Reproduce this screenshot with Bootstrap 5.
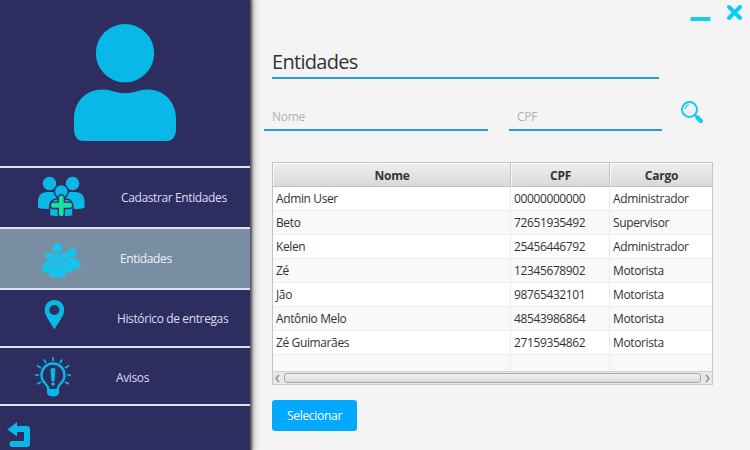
<!DOCTYPE html>
<html lang="pt-BR">
<head>
<meta charset="utf-8">
<meta name="viewport" content="width=device-width, initial-scale=1">
<title>Entidades</title>
<link href="https://cdn.jsdelivr.net/npm/bootstrap@5.3.0/dist/css/bootstrap.min.css" rel="stylesheet">
<style>
body{width:750px;height:450px;background:#f4f4f4;font-family:"Open Sans","Noto Sans",sans-serif;font-size:12px;line-height:16px;color:#333;letter-spacing:-.38px}
svg{display:block;flex:none}
.side{width:250px;background:#2e2d5f;box-shadow:0 0 2px 2px #555,1px 0 7px 2px #999;z-index:1}
.profile{height:166px;padding:23px 0 0 73px}
.side-link{height:61px;border-top:2px solid #e2e2f0;color:#dcdcf0;text-decoration:none}
.side-link.short{height:58px}
.side-link.active{background:#798ea2;color:#eef2fa}
.side-icon{width:116px;flex:none}
.side-foot{border-top:2px solid #e2e2f0;padding:15px 0 0 7px}
.content{padding:4px 7px 0 22px}
.win-bar{height:18px;gap:15px}
.title-line{width:387px;height:33px;margin-top:24px;border-bottom:2px solid #2a9bd2;font-size:20px;line-height:32px;font-weight:400;letter-spacing:-.7px}
.search{margin:20px 0 0 -8px;height:32px}
.line-input{height:32px;border:0;border-bottom:2px solid #2a9bd2;border-radius:0;background:none;padding:4px 8px 0;font-size:12px;letter-spacing:-.3px;outline:0}
.line-input::placeholder{color:#b1b1b1;opacity:1}
.line-input.name{width:224px}
.line-input.cpf{width:153px;margin:0 18px 0 21px}
.grid-box{width:441px;height:223px;margin-top:31px;border:1px solid #c4c4c4;background:#f9f9f9}
.grid-table{table-layout:fixed;width:439px;border-collapse:separate;border-spacing:0;margin:0}
.grid-table th{height:24px;padding:2px 0 0 1px;text-align:center;font-weight:700;letter-spacing:-.25px;background:linear-gradient(#efefef,#d9d9d9);border-right:1px solid #c4c4c4;border-bottom:1px solid #c4c4c4;box-shadow:inset 1px 1px #f8f8f8}
.grid-table td{height:24px;padding:1px 0 0 3px;background:#fff;border-right:1px solid #ececec;border-bottom:1px solid #ececec;white-space:nowrap}
.grid-table tr:nth-child(even) td{background:#f9f9f9}
.grid-table tr>:last-child{border-right:0}
.grid-table .filler td{height:16px;border-bottom:0}
.hbar{height:13px;border-top:1px solid #d4d4d4;background:#e8e8e8;padding:0 2px 0 2px}
.hthumb{height:10px;margin:1px 4px 0 4px;border:1px solid #a8a8a8;border-radius:3px;background:linear-gradient(#f2f2f2,#dadada)}
.btn-pick{width:85px;height:31px;margin-top:15px;padding:0;border:0;border-radius:3px;background:#03a9ff;color:#fff;font-size:12px;letter-spacing:-.3px}
.btn-pick:hover{background:#0398e8;color:#fff}
</style>
</head>
<body class="d-flex overflow-hidden">
<aside class="side d-flex flex-column flex-shrink-0 position-relative">
  <div class="profile">
    <svg width="104" height="119" fill="#08b9e8"><circle cx="52" cy="30.200" r="29.200"/><path d="M1 96C1 78 14 66.600 29 66.600C40 66.600 40 70.300 52 70.300S64 66.600 75 66.600C90 66.600 103 78 103 96V108Q102 118 93 118H11Q2 118 1 108Z"/></svg>
  </div>
  <nav class="d-flex flex-column">
    <a class="side-link d-flex align-items-center" href="#">
      <span class="side-icon ps-4"><svg class="ms-2" width="60" height="54" fill="#08b9e8">
        <circle cx="17.500" cy="12.500" r="6.800"/><circle cx="40.500" cy="12.500" r="6.800"/>
        <path d="M6 37V31Q6 21 15 21H20Q24 21 25 27V37Q14 39 6 37ZM52.500 37V31Q52.500 21 43.500 21H38Q34 21 33 27V37Q44 39 52.500 37Z"/>
        <g stroke="#2e2d5f" stroke-width="1.500"><circle cx="29.300" cy="20.500" r="7"/><path d="M17.500 45V38Q17.500 28 25 28H34Q41 28 41 38V45Q29 47 17.500 45Z"/></g>
        <path d="M26.300 26Q29.300 21 32.300 26V31.200H39Q42.500 34.200 39 37.500H32.300V44Q29.300 48 26.300 44V37.500H20Q16.500 34.200 20 31.200H26.300Z" fill="#18e29b" stroke="#2e2d5f" stroke-width="1.300"/>
      </svg></span><span style="margin-left:5px">Cadastrar Entidades</span>
    </a>
    <a class="side-link active d-flex align-items-center" href="#">
      <span class="side-icon ps-4"><svg class="ms-3 mt-1" width="44" height="38" fill="#15c4f0" stroke="#56a3c0" stroke-width="1">
        <circle cx="17.500" cy="6" r="5"/><path d="M11.500 22V17Q11.500 11.500 17.500 11.500T23.500 17V22Z"/>
        <circle cx="32" cy="10.500" r="4.700"/><path d="M25 26V20Q26 15.500 32 15.500Q40 15.500 40 23V26Q33 29 25 26Z"/>
        <circle cx="9.800" cy="14.500" r="4.500"/><path d="M2 30V26Q2 19.400 10 19.400Q17 19.400 17 26V30Q9 32 2 30Z"/>
        <circle cx="25" cy="14.500" r="4.500"/><path d="M18 30V26Q18 19.400 25 19.400Q32.500 19.400 32.500 26V30Q25 32 18 30Z"/>
        <circle cx="17.500" cy="19" r="5"/><path d="M9.500 34.500V31Q9.500 24.500 17.500 24.500T25.500 31V34.500Q17.500 37.500 9.500 34.500Z"/>
      </svg></span><span style="margin-left:4px">Entidades</span>
    </a>
    <a class="side-link short d-flex align-items-center" href="#">
      <span class="side-icon ps-4"><svg width="60" height="50" fill="#08b9e8"><path fill-rule="evenodd" d="M30.400 7C36 7 40.200 11 40.200 17C40.200 23 34 30 30.400 36.500C27 30 20.700 23 20.700 17C20.700 11 25 7 30.400 7ZM30.400 12A5 5 0 1 0 30.400 22A5 5 0 1 0 30.400 12Z"/></svg></span><span style="margin-left:1px;padding-top:2px">Histórico de entregas</span>
    </a>
    <a class="side-link short d-flex align-items-center" href="#">
      <span class="side-icon ps-4"><svg width="60" height="44" fill="none" stroke="#08b9e8" stroke-width="1.700">
        <path d="M25 37Q24 32 21 29Q17.500 26 17.500 21A11.500 11.500 0 0 1 40.500 21Q40.500 26 37 29Q34 32 33 37Z" stroke-width="2.400"/>
        <path d="M23 35H35V39Q34 42.500 29 42.500Q24 42.500 23 39Z" fill="#08b9e8" stroke="none"/>
        <path d="M27 15Q29 13.500 31 15L30 27H28Z" fill="#08b9e8" stroke-width="1"/><circle cx="29" cy="30" r="1.800" fill="#08b9e8" stroke="none"/>
        <path d="M29 3V7M20 5.500L22 9M38 5.500L36 9M13 11.500L17 14M45 11.500L41 14M11 21H15M43 21H47M13 30L17 28M45 30L41 28"/>
      </svg></span><span class="pt-1">Avisos</span>
    </a>
  </nav>
  <div class="side-foot flex-grow-1">
    <svg width="24" height="27" fill="#08b9e8"><path d="M.5 8.500L10 1V5H20Q23 5 23 8V23Q23 26 20 26H5Q2.500 26 2.500 23Q2.500 20 5 20H17V11H10V15.500Z"/></svg>
  </div>
</aside>
<main class="content flex-grow-1">
  <div class="win-bar d-flex justify-content-end">
    <svg width="21" height="18"><path d="M.500 15H20.500" stroke="#18cdf2" stroke-width="4"/></svg>
    <svg width="17" height="18"><path d="M3 3L14 14M14 3L3 14" stroke="#08cdf5" stroke-width="4" stroke-linecap="round"/></svg>
  </div>
  <h1 class="title-line mb-0">Entidades</h1>
  <form class="search d-flex">
    <input class="line-input name" placeholder="Nome" aria-label="Nome">
    <input class="line-input cpf" placeholder="CPF" aria-label="CPF">
    <svg width="26" height="26" fill="none" stroke="#16c7ef" stroke-width="2"><circle cx="9.500" cy="10.500" r="7.500"/><path d="M5 10Q6 6 9 6" stroke-width="1.200"/><path d="M15 16L17 18"/><path d="M17.500 18.500L20.800 22" stroke="#08cdf5" stroke-width="4.400" stroke-linecap="round"/></svg>
  </form>
  <section class="grid-box">
    <table class="grid-table">
      <colgroup><col style="width:238px"><col style="width:99px"><col style="width:102px"></colgroup>
      <thead><tr><th>Nome</th><th>CPF</th><th>Cargo</th></tr></thead>
      <tbody>
        <tr><td>Admin User</td><td>00000000000</td><td>Administrador</td></tr>
        <tr><td>Beto</td><td>72651935492</td><td>Supervisor</td></tr>
        <tr><td>Kelen</td><td>25456446792</td><td>Administrador</td></tr>
        <tr><td>Zé</td><td>12345678902</td><td>Motorista</td></tr>
        <tr><td>Jão</td><td>98765432101</td><td>Motorista</td></tr>
        <tr><td>Antônio Melo</td><td>48543986864</td><td>Motorista</td></tr>
        <tr><td>Zé Guimarães</td><td>27159354862</td><td>Motorista</td></tr>
        <tr class="filler"><td></td><td></td><td></td></tr>
      </tbody>
    </table>
    <div class="hbar d-flex">
      <svg width="5" height="12"><path d="M4 3L1 6.500L4 10" fill="none" stroke="#888" stroke-width="1.200"/></svg>
      <div class="hthumb flex-grow-1"></div>
      <svg width="5" height="12"><path d="M1 3L4 6.500L1 10" fill="none" stroke="#888" stroke-width="1.200"/></svg>
    </div>
  </section>
  <button class="btn btn-pick" type="button">Selecionar</button>
</main>
<script src="https://cdn.jsdelivr.net/npm/bootstrap@5.3.0/dist/js/bootstrap.bundle.min.js"></script>
</body>
</html>
